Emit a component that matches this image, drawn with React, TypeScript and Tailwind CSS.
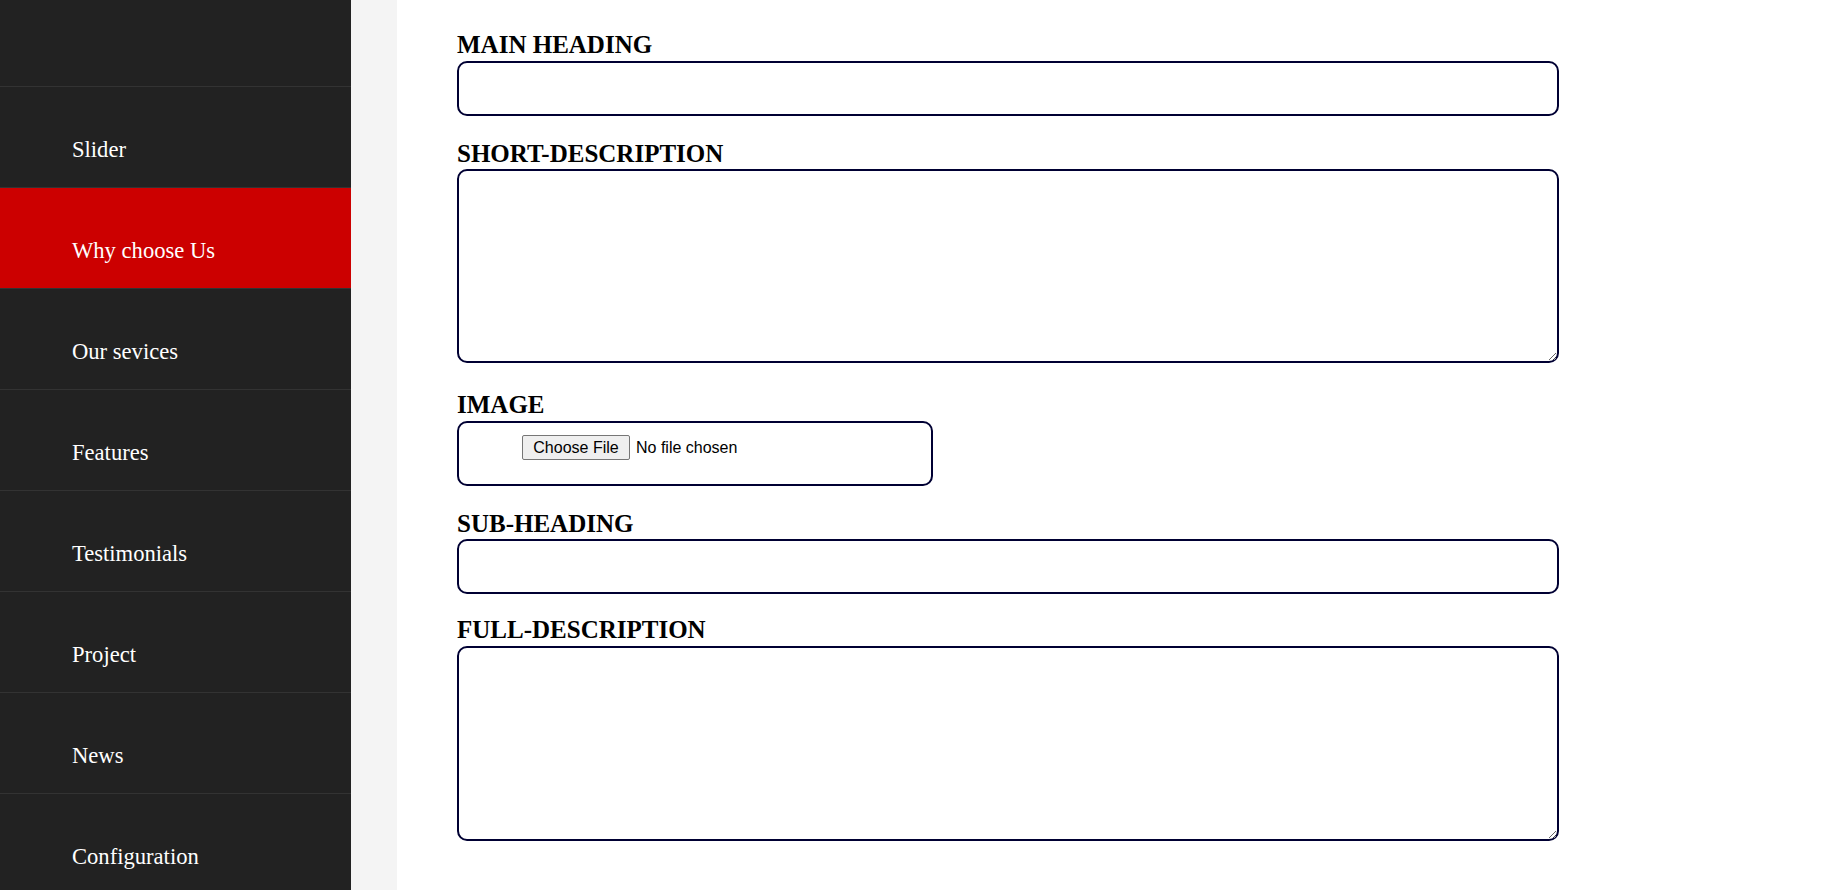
import React from "react";

const navItems = [
  "Slider",
  "Why choose Us",
  "Our sevices",
  "Features",
  "Testimonials",
  "Project",
  "News",
  "Configuration",
];

const serif = { fontFamily: '"Liberation Serif", "Times New Roman", serif' };

function Label({ children, mt }: { children: React.ReactNode; mt: string }) {
  return (
    <div className={`${mt} h-[28px] text-[25px] font-bold leading-[28px] text-black`} style={serif}>
      {children}
    </div>
  );
}

export default function App() {
  return (
    <div className="flex h-[890px] w-full overflow-hidden bg-white" style={serif}>
      <aside className="flex h-full w-[351px] shrink-0 flex-col bg-[#222222]">
        <div className="h-[87px] shrink-0 border-b border-[#333333]" />
        {navItems.map((item) => (
          <div
            key={item}
            className={`h-[101px] shrink-0 border-b border-[#333333] pl-[72px] pt-[50px] text-[22.6px] leading-[26px] text-white ${
              item === "Why choose Us" ? "bg-[#cc0000]" : ""
            }`}
          >
            {item}
          </div>
        ))}
      </aside>
      <div className="h-full w-[46px] shrink-0 bg-[#f4f4f4]" />
      <main className="flex-1 pl-[60px]">
        <div className="flex w-[1102px] flex-col pt-[31px]">
          <Label mt="mt-0">MAIN HEADING</Label>
          <input
            type="text"
            className="mt-[2px] block h-[55px] w-full rounded-[10px] border-2 border-[#000033] bg-white px-2 outline-none"
          />

          <Label mt="mt-[24px]">SHORT-DESCRIPTION</Label>
          <textarea className="mt-[1px] block h-[194px] w-full rounded-[10px] border-2 border-[#000033] bg-white p-2 outline-none" />

          <Label mt="mt-[28px]">IMAGE</Label>
          <div className="mt-[2px] flex h-[65px] w-[476px] items-start rounded-[10px] border-2 border-[#000033] bg-white pl-[63px] pt-[12px]">
            <div
              className="flex items-center text-[16px] text-black"
              style={{ fontFamily: '"Liberation Sans", Arial, sans-serif' }}
            >
              <span className="flex h-[25px] w-[108px] items-center justify-center rounded-[2px] border border-[#767676] bg-[#efefef] leading-none">
                Choose File
              </span>
              <span className="ml-[6px] leading-none">No file chosen</span>
            </div>
          </div>

          <Label mt="mt-[24px]">SUB-HEADING</Label>
          <input
            type="text"
            className="mt-[1px] block h-[55px] w-full rounded-[10px] border-2 border-[#000033] bg-white px-2 outline-none"
          />

          <Label mt="mt-[22px]">FULL-DESCRIPTION</Label>
          <textarea className="mt-[2px] block h-[195px] w-full rounded-[10px] border-2 border-[#000033] bg-white p-2 outline-none" />
        </div>
      </main>
    </div>
  );
}
